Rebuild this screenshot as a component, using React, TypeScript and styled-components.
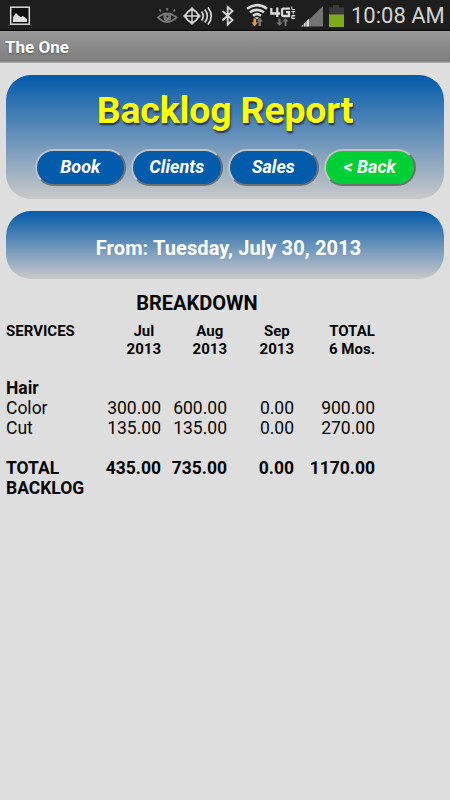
import React from 'react';
import styled, { createGlobalStyle } from 'styled-components';

const Global = createGlobalStyle`
  body { margin: 0; background: #dedede; font-family: Roboto, sans-serif; color: #050505; }
  * { box-sizing: border-box; }
`;

const Screen = styled.div`
  width: 450px;
  height: 800px;
  overflow: hidden;
  background: #dedede;
`;

const StatusBar = styled.header`
  height: 31px;
  display: flex;
  align-items: flex-start;
  justify-content: space-between;
  background: #1e1e1e;
  border-bottom: 1px solid #050505;
  padding-right: 6px;
`;

const StatusRight = styled.div`
  display: flex;
`;

const Clock = styled.span`
  width: 94px;
  padding-left: 1px;
  font-size: 22px;
  line-height: 31px;
  color: #d3d3d3;
  white-space: nowrap;
`;

const TitleBar = styled.div`
  height: 32px;
  padding-left: 5px;
  background: linear-gradient(#a0a0a0, #979797 4%, #7e7e7e 94%, #b5b5b5);
  color: #fff;
  font-size: 17px;
  font-weight: 700;
  line-height: 33px;
  text-shadow: 0 1px 2px rgba(0, 0, 0, 0.35);
`;

const Content = styled.main`
  padding: 12px 6px 0;
`;

const Panel = styled.section<{ $height: number }>`
  height: ${(p) => p.$height}px;
  border-radius: 25px;
  background: linear-gradient(#035bab, #c9c9c9);
  display: flex;
  flex-direction: column;
  align-items: center;
  margin-bottom: 12px;
`;

const Title = styled.h1`
  margin: 10px 0 0;
  font-size: 37.5px;
  line-height: 50px;
  font-weight: 700;
  color: #ff0;
  letter-spacing: -0.2px;
  text-shadow: 1px 2px 2px #202c40;
`;

const Nav = styled.nav`
  display: flex;
  gap: 5px;
  margin-top: 14px;
`;

const NavButton = styled.button<{ $green?: boolean }>`
  width: 91.5px;
  height: 37px;
  padding: 0 0 3px;
  border: 2.5px solid;
  border-color: #c2c2c2 #707070 #707070 #c2c2c2;
  border-radius: 19px;
  background: ${(p) => (p.$green ? '#00cf35' : '#035bab')};
  color: #fff;
  font: italic 700 18px Roboto, sans-serif;
`;

const DateLine = styled.p`
  margin: 0;
  padding-left: 7px;
  font-size: 20px;
  letter-spacing: 0.12px;
  line-height: 74px;
  font-weight: 700;
  color: #fff;
`;

const Heading = styled.h2`
  margin: 0;
  width: 382px;
  font-size: 20px;
  line-height: 24px;
  font-weight: 700;
  text-align: center;
`;

const Table = styled.div`
  display: grid;
  grid-template-columns: 89px 66px 66px 67px 81px;
  margin-top: 8px;
`;

const HeadCell = styled.div<{ $first?: boolean }>`
  height: 55px;
  justify-self: ${(p) => (p.$first ? 'start' : 'end')};
  font-size: 15px;
  line-height: 17.5px;
  font-weight: 700;
  white-space: pre-line;
  text-align: center;
`;

const Cell = styled.div<{ $bold?: boolean; $first?: boolean; $gap?: boolean }>`
  font-size: 17.5px;
  line-height: 20px;
  font-weight: ${(p) => (p.$bold ? 700 : 400)};
  text-align: ${(p) => (p.$first ? 'left' : 'right')};
  padding-top: ${(p) => (p.$gap ? 20 : 0)}px;
  white-space: pre-line;
`;

const headings = ['SERVICES', 'Jul\n2013', 'Aug\n2013', 'Sep\n2013', 'TOTAL\n6 Mos.'];
const rows: { cells: string[]; bold?: boolean; gap?: boolean }[] = [
  { cells: ['Hair', '', '', '', ''], bold: true },
  { cells: ['Color', '300.00', '600.00', '0.00', '900.00'] },
  { cells: ['Cut', '135.00', '135.00', '0.00', '270.00'] },
  { cells: ['TOTAL\nBACKLOG', '435.00', '735.00', '0.00', '1170.00'], bold: true, gap: true },
];

const PictureIcon = () => (
  <svg width="40" height="30" viewBox="0 0 40 30">
    <rect x="10.7" y="7.2" width="18.6" height="17" fill="#111" stroke="#ddd" strokeWidth="1.5" />
    <path d="M13 22v-5l3-4 3 3 2 1 2-1 4 3v3z" fill="#ddd" />
  </svg>
);

const StatusIcons = () => (
  <svg width="200" height="30" viewBox="150 0 200 30" fill="none">
    <g stroke="#777" strokeWidth="1.8">
      <path d="M158 17.500q9-8 18.500 0q-9.500 9-18.500 0z" />
      <circle cx="167.300" cy="17" r="3" fill="#777" />
      <path d="M161 11.500l-1.500-2M167.300 10.500V8M173.500 11.500l1.500-2" />
    </g>
    <circle cx="167.300" cy="16.500" r="1" fill="#1e1e1e" />
    <g stroke="#d3d3d3" strokeWidth="1.4">
      <path d="M184 16l8-8 8 8-8 8zM184 16h16M192 8v16" />
      <circle cx="192" cy="16" r="6" />
      <path d="M201.500 11.500q3.500 4.500 0 9M204.800 9.500q5 6.500 0 13M208 7.500q6.500 8.500 0 17" strokeWidth="1.700" />
      <path d="M222.500 11l10 9-4.800 4.500V7l4.800 4-10 9.500" strokeWidth="1.900" />
    </g>
    <g stroke="#d8d8d8" strokeWidth="2.600">
      <path d="M247 8.700q10-7 20 0M250 12.300q7-5 14 0M253 15.700q4-3 8 0" />
    </g>
    <path d="M255 17.500q2-1 4 0l-2 2z" fill="#d8d8d8" />
    <path d="M253.500 18.500h2.500v4h2l-3.300 3.800-3.200-3.800h2z" fill="#f09a27" />
    <path d="M258.500 26v-4.500h-2l3.300-3.800 3.200 3.800h-2V26z" fill="#777" />
    <g stroke="#d8d8d8" strokeWidth="2.300">
      <path d="M271.300 8v5.500h8.700M277.300 7.500V17M290 8.700h-6.500q-1.500 0-1.500 1.500v4.300q0 1.500 1.500 1.500h5.500v-3.800h-3" />
      <path d="M291.800 6.500v3h3.200M291.300 11.500h4M293.300 11.500v2.800M295.200 15.500h-3.400v3h3.400M291.800 17h3" strokeWidth="1" />
    </g>
    <path d="M278.500 18.500v4h-2l3 3.500 3-3.500h-2v-4zM284.500 26v-4.500h-2l3-3.500 3 3.500h-2V26z" fill="#777" />
    <path d="M302 26.500L323 6v20.500z" fill="#747474" />
    <path d="M301 26.500l8-8v8z" fill="#e0e0e0" />
    <path d="M303.500 22v5M306 20v7" stroke="#1e1e1e" strokeWidth=".6" />
    <path d="M329 7.500h4V5h6v2.500h5V14h-15z" fill="#3b3b3b" />
    <path d="M329 14h15v13h-15z" fill="#7dab19" />
    <path d="M329 14h15" stroke="#4b324f" />
  </svg>
);

export default function App() {
  return (
    <>
      <Global />
      <Screen>
        <StatusBar>
          <PictureIcon />
          <StatusRight>
            <StatusIcons />
            <Clock>10:08 AM</Clock>
          </StatusRight>
        </StatusBar>
        <TitleBar>The One</TitleBar>
        <Content>
          <Panel $height={124}>
            <Title>Backlog Report</Title>
            <Nav>
              <NavButton>Book</NavButton>
              <NavButton>Clients</NavButton>
              <NavButton>Sales</NavButton>
              <NavButton $green>&lt; Back</NavButton>
            </Nav>
          </Panel>
          <Panel $height={68}>
            <DateLine>From: Tuesday, July 30, 2013</DateLine>
          </Panel>
          <Heading>BREAKDOWN</Heading>
          <Table>
            {headings.map((text, i) => (
              <HeadCell key={text} $first={i === 0}>{text}</HeadCell>
            ))}
            {rows.map((row) =>
              row.cells.map((text, i) => (
                <Cell key={row.cells[0] + i} $first={i === 0} $bold={row.bold} $gap={row.gap}>
                  {text}
                </Cell>
              )),
            )}
          </Table>
        </Content>
      </Screen>
    </>
  );
}
